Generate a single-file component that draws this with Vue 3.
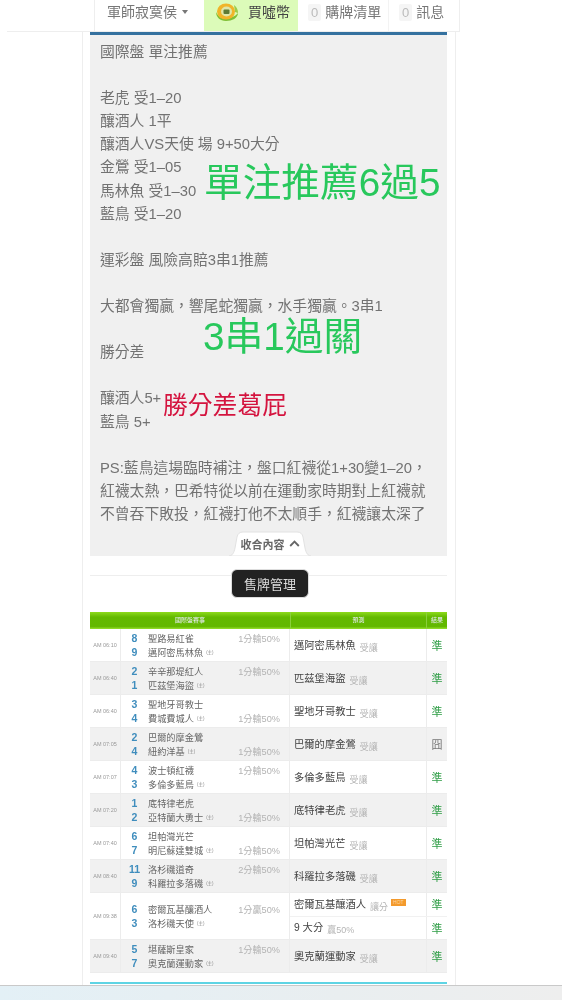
<script setup>
const lines = [
  '國際盤 單注推薦', '', '老虎 受1–20', '釀酒人 1平', '釀酒人VS天使 場 9+50大分', '金鶯 受1–05', '馬林魚 受1–30', '藍鳥 受1–20', '',
  '運彩盤 風險高賠3串1推薦', '', '大都會獨贏，響尾蛇獨贏，水手獨贏。3串1', '', '勝分差', '', '釀酒人5+', '藍鳥 5+', '',
  'PS:藍鳥這場臨時補注，盤口紅襪從1+30變1–20，', '紅襪太熱，巴希特從以前在運動家時期對上紅襪就', '不曾吞下敗投，紅襪打他不太順手，紅襪讓太深了'
]

const games = [
  { time: 'AM 06:10', a: 8, an: '聖路易紅雀', b: 9, bn: '邁阿密馬林魚', odds: '1分輸50%', low: false, picks: [{ name: '邁阿密馬林魚', note: '受讓', res: '準' }] },
  { time: 'AM 06:40', a: 2, an: '辛辛那堤紅人', b: 1, bn: '匹茲堡海盜', odds: '1分輸50%', low: false, picks: [{ name: '匹茲堡海盜', note: '受讓', res: '準' }] },
  { time: 'AM 06:40', a: 3, an: '聖地牙哥教士', b: 4, bn: '費城費城人', odds: '1分輸50%', low: true, picks: [{ name: '聖地牙哥教士', note: '受讓', res: '準' }] },
  { time: 'AM 07:05', a: 2, an: '巴爾的摩金鶯', b: 4, bn: '紐約洋基', odds: '1分輸50%', low: true, picks: [{ name: '巴爾的摩金鶯', note: '受讓', res: '囧' }] },
  { time: 'AM 07:07', a: 4, an: '波士頓紅襪', b: 3, bn: '多倫多藍鳥', odds: '1分輸50%', low: false, picks: [{ name: '多倫多藍鳥', note: '受讓', res: '準' }] },
  { time: 'AM 07:20', a: 1, an: '底特律老虎', b: 2, bn: '亞特蘭大勇士', odds: '1分輸50%', low: true, picks: [{ name: '底特律老虎', note: '受讓', res: '準' }] },
  { time: 'AM 07:40', a: 6, an: '坦帕灣光芒', b: 7, bn: '明尼蘇達雙城', odds: '1分輸50%', low: true, picks: [{ name: '坦帕灣光芒', note: '受讓', res: '準' }] },
  { time: 'AM 08:40', a: 11, an: '洛杉磯道奇', b: 9, bn: '科羅拉多落磯', odds: '2分輸50%', low: false, picks: [{ name: '科羅拉多落磯', note: '受讓', res: '準' }] },
  { time: 'AM 09:38', a: 6, an: '密爾瓦基釀酒人', b: 3, bn: '洛杉磯天使', odds: '1分贏50%', low: false, picks: [{ name: '密爾瓦基釀酒人', note: '讓分', res: '準', hot: true }, { name: '9 大分', note: '贏50%', res: '準' }] },
  { time: 'AM 09:40', a: 5, an: '堪薩斯皇家', b: 7, bn: '奧克蘭運動家', odds: '1分輸50%', low: false, picks: [{ name: '奧克蘭運動家', note: '受讓', res: '準' }] }
]
</script>

<template>
  <div class="page">
    <div class="topbar">
      <div class="nav">
        <span class="nav-item user">軍師寂寞侯 <i class="caret"></i></span>
        <span class="nav-item coin">
          <svg width="24" height="20" viewBox="0 0 24 20">
            <path d="M1 10 C1 15 5 19 11 19 C17 19 23 16 23 11 C20 15 15 16 11 16 C6 16 3 14 1 10 Z" fill="#7fbf35" />
            <path d="M19 3 C22 5 23 8 23 11 L20 10 Z" fill="#9ccc4a" />
            <ellipse cx="11" cy="9.5" rx="9" ry="8" fill="#f0b429" />
            <ellipse cx="11.5" cy="9.5" rx="5.5" ry="5" fill="#dfe6a8" />
            <rect x="8.5" y="7.5" width="6" height="4.5" rx="1" fill="#5d7a35" />
          </svg>
          買噓幣
        </span>
        <span class="nav-item plain"><b class="zero">0</b>購牌清單</span>
        <span class="nav-item plain last"><b class="zero">0</b>訊息</span>
      </div>
    </div>

    <div class="wrap">
      <div class="article">
        <div class="article-text">
          <div v-for="(line, i) in lines" :key="i" class="line">{{ line }}</div>
        </div>
        <span class="note note-a">單注推薦6過5</span>
        <span class="note note-b">3串1過關</span>
        <span class="note note-c">勝分差葛屁</span>
        <div class="collapse">
          <svg class="tab-shape" width="82" height="25" viewBox="0 0 82 25">
            <path d="M0 25 C3 25 5 22 6 17 L8 6 Q9 1 14 1 L68 1 Q73 1 74 6 L76 17 C77 22 79 25 82 25 Z" fill="#fff" stroke="#e2e2e2" />
          </svg>
          <span class="tab-label">收合內容</span>
          <svg class="tab-chevron" width="11" height="7" viewBox="0 0 11 7"><path d="M1.2 6 L5.5 1.6 L9.8 6" fill="none" stroke="#666" stroke-width="1.8" /></svg>
        </div>
      </div>

      <div class="divider">
        <button class="manage">售牌管理</button>
      </div>

      <div class="board">
        <div class="board-head">
          <span class="h-match">國際盤賽事</span>
          <span class="h-pick">預測</span>
          <span class="h-res">結果</span>
        </div>
        <div v-for="(g, i) in games" :key="i" class="game" :class="{ odd: i % 2 === 1, tall: g.picks.length > 1 }">
          <div class="time">{{ g.time }}</div>
          <div class="match">
            <div class="teams">
              <div class="team"><b class="num">{{ g.a }}</b><span>{{ g.an }}</span></div>
              <div class="team"><b class="num">{{ g.b }}</b><span>{{ g.bn }}</span><small>(主)</small></div>
            </div>
            <div class="odds" :class="{ low: g.low }">{{ g.odds }}</div>
          </div>
          <div class="picks">
            <div v-for="(p, k) in g.picks" :key="k" class="pick">
              <div class="pick-name">
                <span class="pname">{{ p.name }}</span>
                <span class="pnote">{{ p.note }}</span>
                <em v-if="p.hot" class="hot">HOT</em>
              </div>
              <div class="res" :class="{ miss: p.res === '囧' }">{{ p.res }}</div>
            </div>
          </div>
        </div>
        <div class="cyan"></div>
      </div>
    </div>

    <div class="browserbar"></div>
  </div>
</template>

<style>
html, body { margin: 0; background: #fff; }
</style>

<style scoped>
.page {
  height: 1000px;
  overflow: hidden;
  display: flex;
  flex-direction: column;
  font-family: "Liberation Sans", "Noto Sans CJK TC", sans-serif;
  filter: blur(0.5px);
}

.topbar {
  height: 32px;
  flex-shrink: 0;
  margin-left: 7px;
  width: 453px;
  border-bottom: 1px solid #eee;
  box-sizing: border-box;
  padding-left: 87px;
}

.nav {
  display: flex;
  height: 100%;
  border-left: 1px solid #eee;
  border-right: 1px solid #eee;
  font-size: 14px;
  color: #777;
  width: 366px;
  box-sizing: border-box;
}

.nav-item {
  display: flex;
  align-items: center;
  white-space: nowrap;
  line-height: 1;
  padding-bottom: 7px;
  box-sizing: border-box;
}

.user { width: 109px; padding-left: 12px; gap: 5px; }

.caret {
  width: 0;
  height: 0;
  border-left: 3.5px solid transparent;
  border-right: 3.5px solid transparent;
  border-top: 4px solid #777;
}

.coin {
  width: 94px;
  background: #dcfbb9;
  color: #444;
  padding-left: 11px;
  gap: 9px;
}

.coin svg { flex-shrink: 0; }

.plain { width: 91px; padding-left: 10px; border-right: 1px solid #f3f3f3; }
.last { flex: 1; border-right: 0; }

.zero {
  font-weight: 400;
  color: #bbb;
  background: #f5f5f5;
  border-radius: 2px;
  font-size: 13px;
  padding: 2px 3px;
  margin-right: 4px;
}

.wrap {
  flex: 1;
  margin-left: 82px;
  width: 374px;
  box-sizing: border-box;
  border-left: 1px solid #eee;
  border-right: 1px solid #eee;
  padding: 0 8px 0 7px;
  min-height: 0;
}

.article {
  position: relative;
  height: 524px;
  background: #f0f0f0;
  border-top: 3px solid #35719f;
  box-sizing: border-box;
  overflow: hidden;
}

.article-text {
  padding: 6px 0 0 10px;
  color: #727272;
  font-size: 14.8px;
  line-height: 23.1px;
}

.line { min-height: 23.1px; white-space: nowrap; }

.note { position: absolute; white-space: nowrap; line-height: 1; }
.note-a { left: 114px; top: 129px; font-size: 38.7px; color: #28c85c; }
.note-b { left: 113px; top: 283px; font-size: 38.7px; color: #28c85c; }
.note-c { left: 73px; top: 359px; font-size: 24.8px; color: #d4143f; }

.collapse {
  position: absolute;
  left: 139px;
  bottom: 0;
  width: 82px;
  height: 25px;
  display: flex;
  align-items: center;
  justify-content: center;
  gap: 4px;
  font-size: 11px;
  font-weight: 700;
  color: #666;
}

.tab-shape { position: absolute; left: 0; top: 0; }
.tab-label, .tab-chevron { position: relative; }

.divider {
  height: 56px;
  display: flex;
  justify-content: center;
  align-items: flex-start;
  padding-top: 13px;
  box-sizing: border-box;
  background: linear-gradient(#eee, #eee) 0 19px / 100% 1px no-repeat;
}

.manage {
  width: 78px;
  height: 29px;
  margin-left: 3px;
  background: #222;
  border: 1px solid #ddd;
  border-radius: 6px;
  color: #ddd;
  font: inherit;
  font-size: 13px;
  padding: 0;
}

.board { color: #666; }

.board-head {
  display: flex;
  height: 17px;
  background: linear-gradient(#8edb1c, #63b900 30%, #62b800 85%, #97e02e);
  color: #eef;
  font-size: 6px;
  line-height: 17px;
  text-align: center;
}

.h-match { width: 200px; }
.h-pick { flex: 1; border-left: 1px solid #8ad03a; }
.h-res { width: 20px; border-left: 1px solid #8ad03a; }

.game {
  display: flex;
  height: 33px;
  border-bottom: 1px solid #ececec;
  box-sizing: border-box;
  background: #fff;
}

.game.odd { background: #f1f1f1; }
.game.tall { height: 47px; }

.time {
  width: 31px;
  flex-shrink: 0;
  border-right: 1px solid #ececec;
  box-sizing: border-box;
  display: flex;
  align-items: center;
  justify-content: center;
  font-size: 5.5px;
  color: #999;
  white-space: nowrap;
}

.match {
  width: 169px;
  flex-shrink: 0;
  box-sizing: border-box;
  border-right: 1px solid #ececec;
  display: flex;
  justify-content: space-between;
  align-items: center;
  padding-right: 9px;
}

.teams { display: flex; flex-direction: column; }

.team {
  display: flex;
  align-items: center;
  height: 13.5px;
  font-size: 9.2px;
  color: #666;
  white-space: nowrap;
}

.num {
  width: 27px;
  text-align: center;
  font-size: 10.5px;
  color: #3f8dbd;
}

.team small { font-size: 4.5px; margin-left: 3px; color: #888; }

.odds {
  font-size: 9.2px;
  color: #b3b3b3;
  white-space: nowrap;
  transform: translateY(-7px);
}

.odds.low { transform: translateY(7px); }

.picks {
  flex: 1;
  min-width: 0;
  display: flex;
  flex-direction: column;
}

.pick {
  flex: 1;
  display: flex;
  border-bottom: 1px solid #f1f1f1;
}

.pick:last-child { border-bottom: 0; }

.pick-name {
  flex: 1;
  display: flex;
  align-items: center;
  padding-left: 4px;
  white-space: nowrap;
  min-width: 0;
}

.pname { font-size: 10.3px; color: #444; transform: translateY(-1px); }
.pnote { font-size: 9px; color: #b5b5b5; margin-left: 4px; transform: translateY(1.5px); }

.hot {
  font-style: normal;
  font-size: 5px;
  background: #f39a2d;
  color: #ffd9a0;
  margin-left: 3px;
  padding: 0 2px;
  line-height: 7px;
  transform: translateY(-2px);
}

.res {
  width: 21px;
  flex-shrink: 0;
  border-left: 1px solid #ececec;
  box-sizing: border-box;
  display: flex;
  align-items: center;
  justify-content: center;
  font-size: 11px;
  color: #2e9d45;
}

.res.miss { color: #777; }

.cyan {
  height: 2px;
  margin-top: 9px;
  background: #5ed4e4;
}

.browserbar {
  height: 15px;
  flex-shrink: 0;
  border-top: 1px solid #c9c9c9;
  box-sizing: border-box;
  background: linear-gradient(90deg, #e3f0f6, #e9eef0 60%, #eeeeee);
}
</style>
